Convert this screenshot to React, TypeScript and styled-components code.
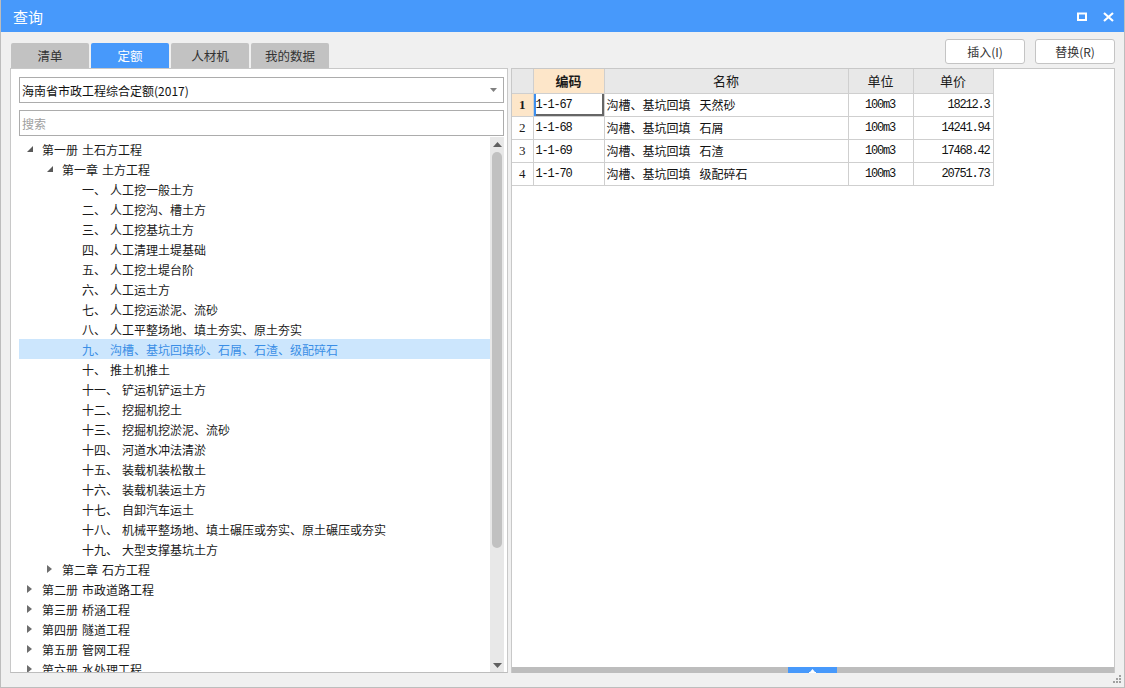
import React from 'react';
import styled, { createGlobalStyle } from 'styled-components';

const GlobalStyle = createGlobalStyle`
  html, body { margin: 0; padding: 0; }
  body {
    font-family: "Noto Sans CJK SC", "Noto Sans", sans-serif;
    background: #f0f0f0;
  }
  * { box-sizing: border-box; }
`;

type TreeNode = {
  level: number
  label: string
  arrow?: 'open' | 'closed'
  selected?: boolean
}

const tree: TreeNode[] = [
  { level: 0, label: '第一册 土石方工程', arrow: 'open' },
  { level: 1, label: '第一章 土方工程', arrow: 'open' },
  { level: 2, label: '一、 人工挖一般土方' },
  { level: 2, label: '二、 人工挖沟、槽土方' },
  { level: 2, label: '三、 人工挖基坑土方' },
  { level: 2, label: '四、 人工清理土堤基础' },
  { level: 2, label: '五、 人工挖土堤台阶' },
  { level: 2, label: '六、 人工运土方' },
  { level: 2, label: '七、 人工挖运淤泥、流砂' },
  { level: 2, label: '八、 人工平整场地、填土夯实、原土夯实' },
  { level: 2, label: '九、 沟槽、基坑回填砂、石屑、石渣、级配碎石', selected: true },
  { level: 2, label: '十、 推土机推土' },
  { level: 2, label: '十一、 铲运机铲运土方' },
  { level: 2, label: '十二、 挖掘机挖土' },
  { level: 2, label: '十三、 挖掘机挖淤泥、流砂' },
  { level: 2, label: '十四、 河道水冲法清淤' },
  { level: 2, label: '十五、 装载机装松散土' },
  { level: 2, label: '十六、 装载机装运土方' },
  { level: 2, label: '十七、 自卸汽车运土' },
  { level: 2, label: '十八、 机械平整场地、填土碾压或夯实、原土碾压或夯实' },
  { level: 2, label: '十九、 大型支撑基坑土方' },
  { level: 1, label: '第二章 石方工程', arrow: 'closed' },
  { level: 0, label: '第二册 市政道路工程', arrow: 'closed' },
  { level: 0, label: '第三册 桥涵工程', arrow: 'closed' },
  { level: 0, label: '第四册 隧道工程', arrow: 'closed' },
  { level: 0, label: '第五册 管网工程', arrow: 'closed' },
  { level: 0, label: '第六册 水处理工程', arrow: 'closed' },
];

const rows = [
  { code: '1-1-67', name: '沟槽、基坑回填 天然砂', unit: '100m3', price: '18212.3' },
  { code: '1-1-68', name: '沟槽、基坑回填 石屑', unit: '100m3', price: '14241.94' },
  { code: '1-1-69', name: '沟槽、基坑回填 石渣', unit: '100m3', price: '17468.42' },
  { code: '1-1-70', name: '沟槽、基坑回填 级配碎石', unit: '100m3', price: '20751.73' },
];

const tabs = ['清单', '定额', '人材机', '我的数据'];

export default function App() {
  return (
    <>
      <GlobalStyle />
      <Window>
        <TitleBar>
          <Title>查询</Title>
          <TitleIcons>
            <svg width="10" height="10" viewBox="0 0 10 10">
              <rect x="1" y="1.5" width="8" height="6.5" fill="none" stroke="#fff" strokeWidth="2" />
            </svg>
            <svg width="11" height="10" viewBox="0 0 11 10">
              <path d="M1 1 L10 9 M10 1 L1 9" stroke="#fff" strokeWidth="2.2" />
            </svg>
          </TitleIcons>
        </TitleBar>
        <Body>
          <TopRow>
            <Tabs>
              {tabs.map(t => (
                <Tab key={t} $active={t === '定额'}>{t}</Tab>
              ))}
            </Tabs>
            <Buttons>
              <Button>插入(I)</Button>
              <Button>替换(R)</Button>
            </Buttons>
          </TopRow>
          <Panels>
            <LeftPanel>
              <Select>
                <span>海南省市政工程综合定额(2017)</span>
                <svg width="7" height="4" viewBox="0 0 7 4"><path d="M0 0 H7 L3.5 4 Z" fill="#808080" /></svg>
              </Select>
              <Search>搜索</Search>
              <TreeArea>
                <TreeList>
                  {tree.map((n, i) => {
                    const [head, tail] = n.label.split(' ');
                    return (
                      <TreeRow key={i} $level={n.level} $selected={!!n.selected}>
                        <ArrowSlot>
                          {n.arrow === 'open' && (
                            <svg width="6" height="6" viewBox="0 0 6 6"><path d="M6 0 V6 H0 Z" fill="#595959" /></svg>
                          )}
                          {n.arrow === 'closed' && (
                            <svg width="5" height="8" viewBox="0 0 5 8"><path d="M0 0 L5 4 L0 8 Z" fill="#6e6e6e" /></svg>
                          )}
                        </ArrowSlot>
                        <TreeLabel>
                          <span>{head}</span>
                          <span>{tail}</span>
                        </TreeLabel>
                      </TreeRow>
                    );
                  })}
                </TreeList>
                <VScroll>
                  <ScrollBtn>
                    <svg width="9" height="5" viewBox="0 0 9 5"><path d="M0 5 L4.5 0 L9 5 Z" fill="#606060" /></svg>
                  </ScrollBtn>
                  <Thumb />
                  <ScrollBtn>
                    <svg width="9" height="5" viewBox="0 0 9 5"><path d="M0 0 H9 L4.5 5 Z" fill="#606060" /></svg>
                  </ScrollBtn>
                </VScroll>
              </TreeArea>
            </LeftPanel>
            <RightPanel>
              <Grid>
                <colgroup>
                  <col style={{ width: 21 }} />
                  <col style={{ width: 71 }} />
                  <col style={{ width: 244 }} />
                  <col style={{ width: 65 }} />
                  <col style={{ width: 80 }} />
                </colgroup>
                <thead>
                  <tr>
                    <Th />
                    <Th $active>编码</Th>
                    <Th>名称</Th>
                    <Th>单位</Th>
                    <Th>单价</Th>
                  </tr>
                </thead>
                <tbody>
                  {rows.map((r, i) => {
                    const [head, tail] = r.name.split(' ');
                    return (
                      <tr key={r.code}>
                        <RowNum $active={i === 0}>{i + 1}</RowNum>
                        <Td $current={i === 0}>{r.code}</Td>
                        <NameTd>
                          {head}
                          <NameTail>{tail}</NameTail>
                        </NameTd>
                        <Td $align="center">{r.unit}</Td>
                        <Td $align="right">{r.price}</Td>
                      </tr>
                    );
                  })}
                </tbody>
              </Grid>
              <Spacer />
              <HBar>
                <Handle>
                  <svg width="9" height="5" viewBox="0 0 9 5"><path d="M2 4 L4.5 1 L7 4 Z M1 4 H8 V5 H1 Z" fill="#fff" /></svg>
                </Handle>
              </HBar>
            </RightPanel>
          </Panels>
          <Status>
            <svg width="10" height="10" viewBox="0 0 10 10" fill="#a0a0a0">
              <rect x="7" y="0" width="2" height="2" />
              <rect x="4" y="3" width="2" height="2" />
              <rect x="7" y="3" width="2" height="2" />
              <rect x="1" y="6" width="2" height="2" />
              <rect x="4" y="6" width="2" height="2" />
              <rect x="7" y="6" width="2" height="2" />
            </svg>
          </Status>
        </Body>
      </Window>
    </>
  );
}

const Window = styled.div`
  width: 1125px;
  height: 688px;
  display: flex;
  flex-direction: column;
  background: #f0f0f0;
  border: 1px solid #bdbdbd;
  border-top: none;
  overflow: hidden;
`

const TitleBar = styled.div`
  height: 32px;
  flex: none;
  background: #4799fb;
  display: flex;
  align-items: center;
  justify-content: space-between;
  padding: 0 10px 0 12px;
`

const Title = styled.div`
  color: #fff;
  font-size: 15px;
`

const TitleIcons = styled.div`
  display: flex;
  align-items: center;
  gap: 16px;
  margin-top: 1px;
`

const Body = styled.div`
  flex: 1;
  display: flex;
  flex-direction: column;
  padding: 0 9px 0 9px;
  min-height: 0;
`

const TopRow = styled.div`
  height: 36px;
  flex: none;
  display: flex;
  justify-content: space-between;
`

const Tabs = styled.div`
  display: flex;
  align-items: flex-end;
  gap: 2px;
  margin-left: 1px;
`

const Tab = styled.div<{ $active?: boolean }>`
  width: 78px;
  height: 25px;
  display: flex;
  align-items: center;
  justify-content: center;
  font-size: 12.5px;
  border-radius: 2px 2px 0 0;
  background: ${p => (p.$active ? '#4799fb' : '#c2c2c2')};
  color: ${p => (p.$active ? '#fff' : '#333')};
`

const Buttons = styled.div`
  display: flex;
  gap: 10px;
  padding-top: 7px;
`

const Button = styled.div`
  width: 80px;
  height: 25px;
  border: 1px solid #c4c4c4;
  border-radius: 3px;
  background: #fff;
  display: flex;
  align-items: center;
  justify-content: center;
  font-size: 12px;
  color: #333;
`

const Panels = styled.div`
  flex: 1;
  display: flex;
  gap: 3px;
  min-height: 0;
`

const LeftPanel = styled.div`
  width: 498px;
  flex: none;
  display: flex;
  flex-direction: column;
  background: #fff;
  border: 1px solid #c8c8c8;
  border-bottom-color: #bdbdbd;
  padding: 8px 3px 0 8px;
`

const Select = styled.div`
  height: 26px;
  border: 1px solid #acacac;
  display: flex;
  align-items: center;
  justify-content: space-between;
  padding: 0 6px 0 2px;
  font-size: 12px;
  color: #111;
`

const Search = styled.div`
  height: 26px;
  margin-top: 7px;
  border: 1px solid #acacac;
  display: flex;
  align-items: center;
  padding-left: 2px;
  font-size: 12px;
  color: #a0a0a0;
`

const TreeArea = styled.div`
  flex: 1;
  display: flex;
  min-height: 0;
  margin-top: 1px;
  overflow: hidden;
`

const TreeList = styled.div`
  flex: 1;
  padding-top: 2px;
  overflow: hidden;
`

const TreeRow = styled.div<{ $level: number; $selected?: boolean }>`
  height: 20px;
  display: flex;
  align-items: center;
  padding-left: ${p => p.$level * 20}px;
  background: ${p => (p.$selected ? '#cce6fd' : 'transparent')};
  color: ${p => (p.$selected ? '#3a8ee6' : '#1a1a1a')};
  font-size: 12px;
  white-space: nowrap;
`

const ArrowSlot = styled.div`
  width: 20px;
  height: 20px;
  flex: none;
  display: flex;
  align-items: center;
  justify-content: center;
  padding-left: 1px;
`

const TreeLabel = styled.span`
  margin-left: 3px;
  display: flex;
  gap: 4px;
`

const VScroll = styled.div`
  width: 14px;
  flex: none;
  background: #e8e8e8;
  display: flex;
  flex-direction: column;
  justify-content: space-between;
  align-items: center;
`

const ScrollBtn = styled.div`
  height: 14px;
  display: flex;
  align-items: center;
  justify-content: center;
`

const Thumb = styled.div`
  width: 10px;
  height: 396px;
  margin-top: 1px;
  margin-bottom: auto;
  border-radius: 5px;
  background: #c1c1c1;
`

const RightPanel = styled.div`
  flex: 1;
  display: flex;
  flex-direction: column;
  background: #fff;
  border: 1px solid #c8c8c8;
  border-bottom: none;
`

const Grid = styled.table`
  border-collapse: collapse;
  table-layout: fixed;
  width: 481px;
`

const Th = styled.th<{ $active?: boolean }>`
  height: 24px;
  padding: 0;
  border: 1px solid #cfcfcf;
  border-top: none;
  background: ${p => (p.$active ? '#fde6c9' : '#e8e8e8')};
  font-weight: ${p => (p.$active ? 700 : 400)};
  font-size: 13px;
  color: #1a1a1a;
  &:first-child { border-left: none; }
`

const RowNum = styled.td<{ $active?: boolean }>`
  height: 23px;
  padding: 0;
  border: 1px solid #cfcfcf;
  border-left: none;
  text-align: center;
  font-family: "Liberation Serif", "DejaVu Serif", serif;
  font-size: 13px;
  background: ${p => (p.$active ? '#fde6c9' : '#fff')};
  font-weight: ${p => (p.$active ? 700 : 400)};
  color: #1a1a1a;
`

const Td = styled.td<{ $align?: 'left' | 'center' | 'right'; $current?: boolean }>`
  height: 23px;
  padding: 0 3px 0 2px;
  border: 1px solid #cfcfcf;
  text-align: ${p => p.$align || 'left'};
  font-family: "Liberation Mono", monospace;
  font-size: 12px;
  letter-spacing: -1.2px;
  color: #111;
  white-space: nowrap;
  overflow: hidden;
  box-shadow: ${p => (p.$current ? 'inset 2px 0 0 #3d8fef, inset -2px -2px 0 #666' : 'none')};
`

const NameTd = styled.td`
  height: 23px;
  padding: 0 3px 0 2px;
  border: 1px solid #cfcfcf;
  font-family: "Noto Sans CJK SC", sans-serif;
  font-size: 12px;
  color: #111;
  white-space: nowrap;
  overflow: hidden;
`

const NameTail = styled.span`
  margin-left: 9px;
`

const Spacer = styled.div`
  flex: 1;
`

const HBar = styled.div`
  height: 6px;
  flex: none;
  background: #bdbdbd;
  display: flex;
`

const Handle = styled.div`
  width: 49px;
  margin-left: 276px;
  background: #4799fb;
  display: flex;
  align-items: center;
  justify-content: center;
`

const Status = styled.div`
  height: 14px;
  flex: none;
  display: flex;
  justify-content: flex-end;
  align-items: flex-end;
  padding-bottom: 2px;
  margin-right: -7px;
`
